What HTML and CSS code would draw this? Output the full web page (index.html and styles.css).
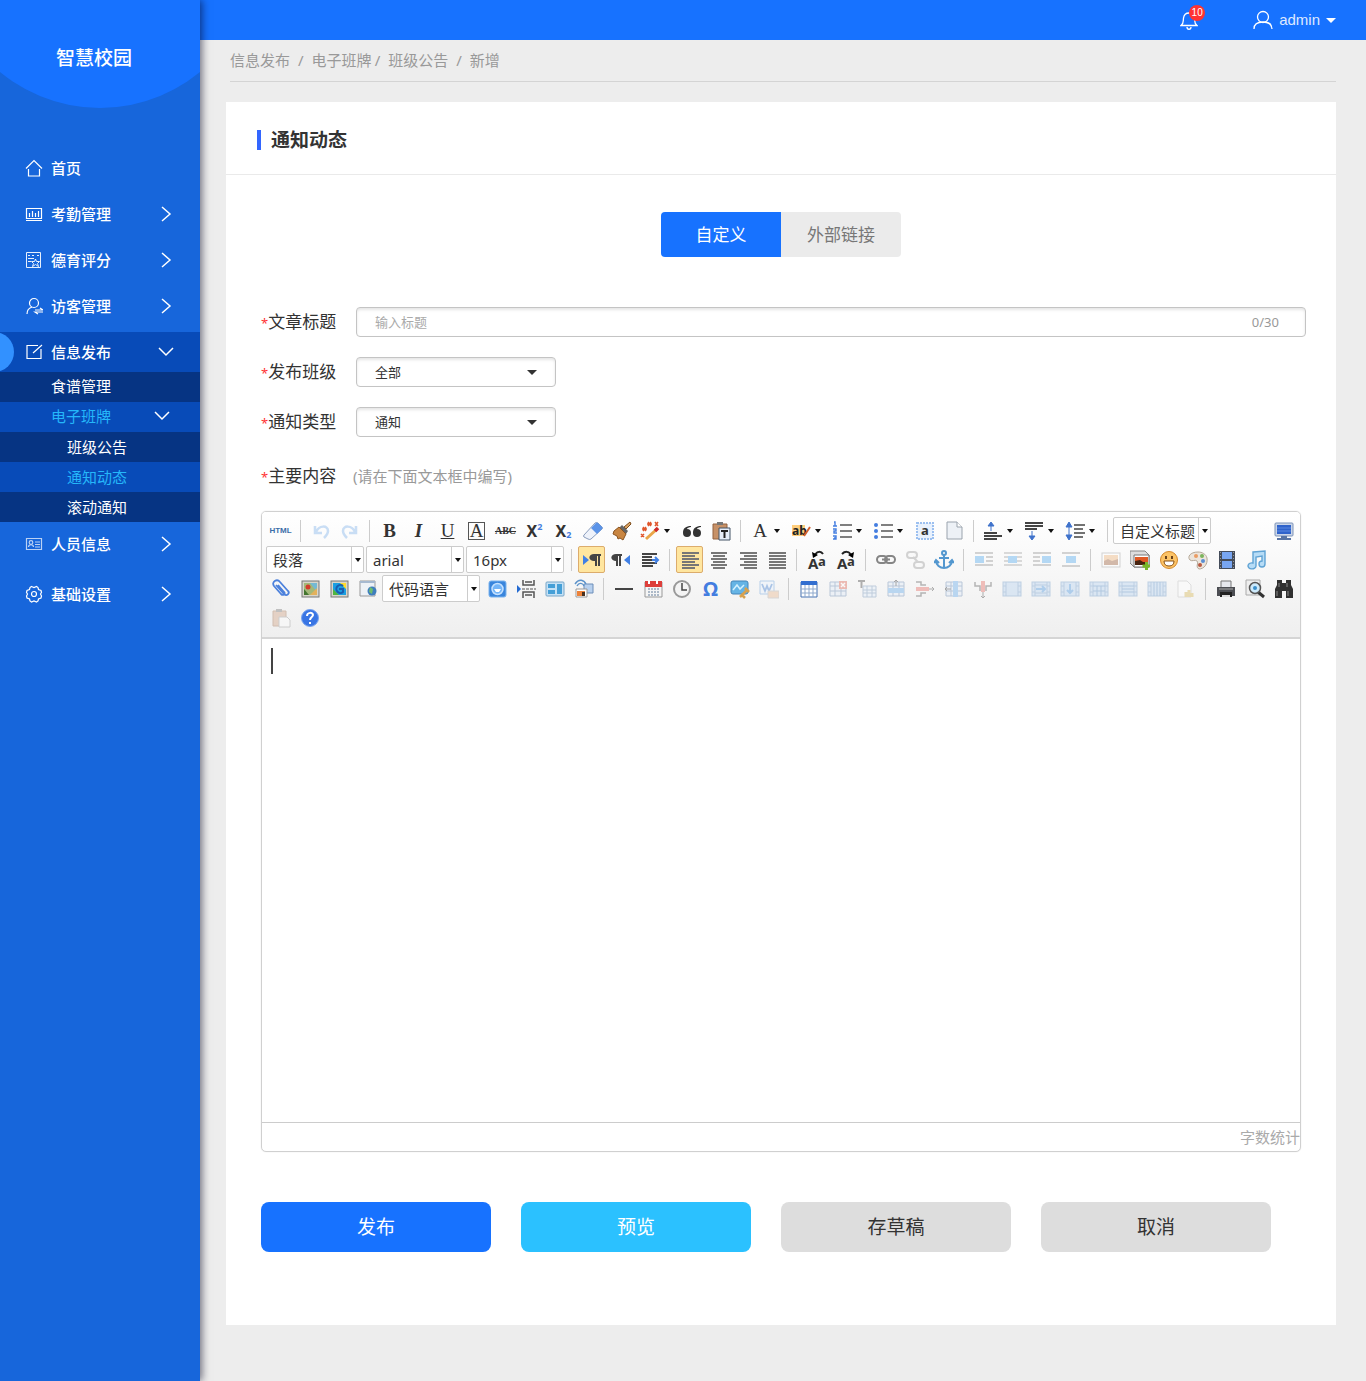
FILE: index.html
```html
<!DOCTYPE html>
<html lang="zh-CN">
<head>
<meta charset="utf-8">
<meta name="viewport" content="width=device-width, initial-scale=1">
<title>智慧校园</title>
<link rel="stylesheet" href="styles.css">
</head>
<body>
<svg class="sprite" aria-hidden="true">
  <defs>
    <symbol id="right" viewBox="0 0 16 16"><path d="M4 1l8 7-8 7" fill="none" stroke="currentColor" stroke-width="1.5"/></symbol>
    <symbol id="down" viewBox="0 0 16 16"><path d="M1 4l7 7 7-7" fill="none" stroke="currentColor" stroke-width="1.5"/></symbol>
    <symbol id="drop" viewBox="0 0 10 5"><path d="M0 0h10L5 5z" fill="currentColor"/></symbol>
    <symbol id="undo" viewBox="0 0 20 20"><path d="M4 5v7h7M5 11c3-7 12-7 12-1 0 3-2 5-4 7" fill="none" stroke="#7db0ea" stroke-width="2.5"/></symbol>
    <symbol id="redo" viewBox="0 0 20 20"><path d="M16 5v7H9M15 11C12 4 3 4 3 10c0 3 2 5 4 7" fill="none" stroke="#7db0ea" stroke-width="2.5"/></symbol>
    <symbol id="eraser" viewBox="0 0 20 20"><path d="M1 14L12 2q1-1 3 0l4 4q1 1 0 2L8 18q-1 1-3 0l-4-2q-1-1 0-2z" fill="#eef2fa" stroke="#8a9dbd"/><path d="M8 7l5-5q1-1 2 0l4 4q1 1 0 2l-5 5z" fill="#5a93e8"/></symbol>
    <symbol id="brush" viewBox="0 0 20 20"><path d="M18 1l1 2-5 5-2-2z" fill="#dca566" stroke="#7c4a18"/><path d="M10 4l6 6-2 3-7-6z" fill="#666"/><path d="M7 6l7 7-3 6-3-2-2 1-1-3-4-2 1-3z" fill="#c98642" stroke="#8a5420"/></symbol>
    <symbol id="magic" viewBox="0 0 20 20"><path d="M6 18L17 8" stroke="#e9a548" stroke-width="3"/><path d="M15 10l3-3" stroke="#cf2b2b" stroke-width="3.500"/><path d="M3 6l3 4m0-4l-3 4M2 8h5M8 1l3 4m0-4L8 5M7 3h5M15 1l3 4m0-4l-3 4M1 13l3 3m0-3l-3 3" stroke="#e0562c" stroke-width="1.500"/></symbol>
    <symbol id="quote" viewBox="0 0 20 20"><path d="M9 5C4 5 1 7 1 12a4 4 0 1 0 4-4c0-1 2-2 4-2zM19 5c-5 0-8 2-8 7a4 4 0 1 0 4-4c0-1 2-2 4-2z" fill="#333"/></symbol>
    <symbol id="pastetext" viewBox="0 0 20 20"><path d="M2 3h14v15H2z" fill="#c79167" stroke="#936341"/><path d="M6 1h6v3H6z" fill="#777"/><path d="M8 7h11v12H8z" fill="#e6edf8" stroke="#456"/><path d="M10 10h7m-3.500 0v7" stroke="#222" stroke-width="2"/></symbol>
    <symbol id="marker" viewBox="0 0 20 20"><path d="M1 4h13v11H1z" fill="#ffce7c"/><text x="1" y="14" font-size="12" font-weight="700" fill="#222">ab</text><path d="M13 15l6-9" stroke="#d3602d" stroke-width="2"/></symbol>
    <symbol id="ol" viewBox="0 0 20 20"><path d="M8 4h12M8 10h12M8 16h12" stroke="#555" stroke-width="1.500"/><path d="M2 1h1v4M1 5h4M1 8h3v2H2v2h3M1 15h3v3H1m1-1h2" fill="none" stroke="#437de0" stroke-width="1.400"/></symbol>
    <symbol id="ul" viewBox="0 0 20 20"><path d="M8 4h12M8 10h12M8 16h12" stroke="#555" stroke-width="1.500"/><g fill="#437de0"><circle cx="3" cy="4" r="2"/><circle cx="3" cy="10" r="2"/><circle cx="3" cy="16" r="2"/></g></symbol>
    <symbol id="selall" viewBox="0 0 20 20"><rect x="2" y="2" width="16" height="16" fill="#e8f1fd" stroke="#9cc0f0" stroke-width="2" stroke-dasharray="2 1"/><text x="6" y="14" font-size="13" font-weight="700" fill="#333">a</text></symbol>
    <symbol id="page" viewBox="0 0 20 20"><path d="M3 1h10l5 5v12H3z" fill="#edf1f6" stroke="#9aa3ad"/><path d="M13 1v5h5" fill="#fff" stroke="#9aa3ad"/></symbol>
    <symbol id="rowtop" viewBox="0 0 20 20"><path d="M1 12h13M1 15h18M1 18h13" stroke="#444" stroke-width="2"/><path d="M8 10V3M5 5l3-4 3 4z" fill="#3f72cb" stroke="#3f72cb"/></symbol>
    <symbol id="rowbottom" viewBox="0 0 20 20"><path d="M1 2h18M1 5h18M1 8h12" stroke="#444" stroke-width="2"/><path d="M8 10v6M5 15l3 4 3-4z" fill="#3f72cb" stroke="#3f72cb"/></symbol>
    <symbol id="lineh" viewBox="0 0 20 20"><path d="M9 4h11M9 8h9M9 12h11M9 16h9" stroke="#444" stroke-width="1.500"/><path d="M4 2v16M1 6l3-5 3 5zM1 14l3 5 3-5z" fill="#3f72cb" stroke="#3f72cb"/></symbol>
    <symbol id="screen" viewBox="0 0 20 20"><rect x="1" y="2" width="18" height="13" rx="1" fill="#cbd6e8" stroke="#7c93b8"/><path d="M3 4h14v9H3z" fill="#2f63cb"/><path d="M3 7h14M3 10h14" stroke="#5a89e2"/><path d="M7 15h6v2h4v2H3v-2h4z" fill="#5874a4"/></symbol>
    <symbol id="ltr" viewBox="0 0 20 20"><path d="M1 5l6 5-6 5z" fill="#4080e5"/><path d="M19 4h-7a4 3 0 0 0 0 7h1v5h2V6h1v10h2V6h1z" fill="#444"/></symbol>
    <symbol id="rtl" viewBox="0 0 20 20"><path d="M19 5l-6 5 6 5z" fill="#4080e5"/><path d="M11 4H5a4 3 0 0 0 0 7v5h2V6h1v10h2V6h1z" fill="#444"/></symbol>
    <symbol id="indent" viewBox="0 0 20 20"><path d="M2 4h15M2 7h10M2 10h10M2 13h15M2 16h11" stroke="#444" stroke-width="2"/><path d="M12 10h6m-3-3l3 3-3 3" fill="none" stroke="#4080e5" stroke-width="2"/></symbol>
    <symbol id="left" viewBox="0 0 20 20"><path d="M2 3h17M2 6h13M2 9h17M2 12h13M2 15h17M2 18h13" stroke="currentColor" stroke-width="1.800"/></symbol>
    <symbol id="center" viewBox="0 0 20 20"><path d="M2 3h16M4 6h12M2 9h16M4 12h12M2 15h16M4 18h12" stroke="currentColor" stroke-width="1.800"/></symbol>
    <symbol id="alignr" viewBox="0 0 20 20"><path d="M2 3h17M6 6h13M2 9h17M6 12h13M2 15h17M6 18h13" stroke="currentColor" stroke-width="1.800"/></symbol>
    <symbol id="justify" viewBox="0 0 20 20"><path d="M2 3h17M2 6h17M2 9h17M2 12h17M2 15h17M2 18h17" stroke="currentColor" stroke-width="1.800"/></symbol>
    <symbol id="upper" viewBox="0 0 20 20"><text x="1" y="19" font-size="15" font-weight="700" fill="#333">A</text><text x="11" y="16" font-size="13" font-weight="700" fill="#333">a</text><path d="M8 5c2-4 6-4 8-1" fill="none" stroke="#222" stroke-width="2"/><path d="M5 2l1 6 5-3z"/></symbol>
    <symbol id="lower" viewBox="0 0 20 20"><text x="1" y="19" font-size="15" font-weight="700" fill="#333">A</text><text x="11" y="16" font-size="13" font-weight="700" fill="#333">a</text><path d="M6 4c3-3 7-3 9 1" fill="none" stroke="#222" stroke-width="2"/><path d="M18 2l-1 6-5-3z"/></symbol>
    <symbol id="link" viewBox="0 0 20 20"><g fill="none" stroke="#858585" stroke-width="2"><rect x="1" y="6" width="10" height="7" rx="3.500"/><rect x="9" y="6" width="10" height="7" rx="3.500"/><path d="M6 9.500h8"/></g></symbol>
    <symbol id="unlink" viewBox="0 0 20 20"><g fill="none" stroke="#999" stroke-width="2"><rect x="2" y="2" width="10" height="6" rx="3"/><rect x="9" y="12" width="10" height="6" rx="3"/><path d="M8 7l5 5"/></g></symbol>
    <symbol id="anchor" viewBox="0 0 20 20"><g fill="none" stroke="#5397cf" stroke-width="2"><circle cx="10" cy="3" r="2"/><path d="M10 5v13M5 8h10M2 11c0 4 4 7 8 7s8-3 8-7M0 13l2-3 3 3M15 13l3-3 2 3"/></g></symbol>
    <symbol id="imgl" viewBox="0 0 20 20"><path d="M1 3h18M12 7h7M12 11h7M1 15h18" stroke="#999" stroke-width="2"/><path d="M1 6h9v7H1z" fill="#4fa8ee"/></symbol>
    <symbol id="imgi" viewBox="0 0 20 20"><path d="M1 3h18M1 7h18M1 11h18M1 15h18" stroke="#aaa" stroke-width="2"/><path d="M5 6h9v7H5z" fill="#4fa8ee"/></symbol>
    <symbol id="imgr" viewBox="0 0 20 20"><path d="M1 3h18M1 7h7M1 11h7M1 15h18" stroke="#999" stroke-width="2"/><path d="M10 6h9v7h-9z" fill="#4fa8ee"/></symbol>
    <symbol id="imgc" viewBox="0 0 20 20"><path d="M1 3h18M1 16h18" stroke="#999" stroke-width="2"/><path d="M5 6h10v7H5z" fill="#4fa8ee"/></symbol>
    <symbol id="photo" viewBox="0 0 20 20"><rect x="1" y="3" width="18" height="14" fill="#fff" stroke="#999"/><path d="M3 5h14v10H3z" fill="#efb277"/><path d="M3 15v-4l4-2 4 2 6-2v6z" fill="#9a5b36"/></symbol>
    <symbol id="photos" viewBox="0 0 20 20"><path d="M0 1h15l4 4v12H4L0 13z" fill="#ddd" stroke="#888"/><path d="M4 5h15v12H4z" fill="#fff" stroke="#777"/><path d="M5 7h13v8H5z" fill="#e05a25"/><path d="M5 15v-4l5-1 3 2h5v3z" fill="#47230f"/><path d="M16.500 12v8M12.500 16h8" stroke="#78b82a" stroke-width="3"/></symbol>
    <symbol id="smile" viewBox="0 0 20 20"><circle cx="10" cy="10" r="8.500" fill="#fcc366" stroke="#d58829"/><path d="M5 11h10q0 5-5 5t-5-5z" fill="#fff" stroke="#875016"/><path d="M7 6v3M13 6v3" stroke="#694019" stroke-width="2"/></symbol>
    <symbol id="palette" viewBox="0 0 20 20"><path d="M10 2C2 2-1 7 2 10c2 2 5-1 7 1s-2 6 2 8c5 0 9-5 8-11-1-4-5-6-9-6z" fill="#ece5dc" stroke="#b5a898"/><circle cx="8" cy="6" r="2" fill="#eb9c63"/><circle cx="14" cy="6" r="2" fill="#7cb45d"/><circle cx="15" cy="11" r="2" fill="#5a8ed3"/><circle cx="12" cy="15" r="2" fill="#b95a42"/></symbol>
    <symbol id="film" viewBox="0 0 20 20"><path d="M2 1h16v18H2z" fill="#444c5a"/><path d="M5 2h10v7H5zM5 11h10v7H5z" fill="#78a6f2"/><path d="M3.500 2v17M16.500 2v17" stroke="#999" stroke-dasharray="1 2"/></symbol>
    <symbol id="music" viewBox="0 0 20 20"><path d="M7 2l12-1v13a3 3 0 1 1-3-3V6l-6 1v9a4 3 0 1 1-3-3z" fill="#b7dcf6" stroke="#60a3d4" stroke-width="1.400"/></symbol>
    <symbol id="clip" viewBox="0 0 20 20"><path d="M5 6l8 9c3 3 6-1 4-3L9 3C6-1 0 3 3 7l7 8c2 2 5 0 3-2L7 6" fill="none" stroke="#4c81dc" stroke-width="1.800"/></symbol>
    <symbol id="picture" viewBox="0 0 20 20"><rect x="2" y="2" width="17" height="16" fill="#d7d5cb" stroke="#777"/><path d="M4 4h13v12H4z" fill="#74b9d4"/><path d="M4 4h6l7 9v3H4z" fill="#a3b878"/><path d="M10 16l7-7v7z" fill="#e3b15b"/><path d="M4 10l5 6H4z" fill="#43752f"/><circle cx="8" cy="8" r="2.500" fill="#d43b2b"/></symbol>
    <symbol id="gmap" viewBox="0 0 20 20"><rect x="2" y="2" width="17" height="16" fill="#d7d5cb" stroke="#777"/><path d="M4 4h13v12H4z" fill="#1b9ee1"/><path d="M11 4h6v6z" fill="#ffda2a"/><path d="M4 10l6 6H4z" fill="#50b541"/><path d="M14 7a4 4 0 1 0 0 6v-3h-4" fill="none" stroke="#195db0" stroke-width="2"/></symbol>
    <symbol id="frame" viewBox="0 0 20 20"><path d="M2 2h15v15H2z" fill="#edf1f6" stroke="#999"/><path d="M2 3h15" stroke="#a6b9d0" stroke-width="2"/><circle cx="14" cy="12" r="4.500" fill="#3f7ebd"/><path d="M12 8l3 2-1 5-3-2z" fill="#70bd6e"/></symbol>
    <symbol id="app" viewBox="0 0 20 20"><rect x="2" y="2" width="17" height="16" rx="2" fill="#3985dc" stroke="#7bb3ee"/><circle cx="10.500" cy="10" r="5.500" fill="#74b5f8" stroke="#c4e1ff" stroke-width="1.500"/><path d="M7 10h7l-2 3H9z" fill="#fff"/></symbol>
    <symbol id="break" viewBox="0 0 20 20"><path d="M1 6l4 4-4 4z" fill="#236ad1"/><path d="M6 10h14" stroke="#555" stroke-dasharray="3 1"/><path d="M7 1v5h11V1M7 19v-6h11v6M9 3h7M9 16h7" fill="none" stroke="#555" stroke-width="1.500"/></symbol>
    <symbol id="template" viewBox="0 0 20 20"><rect x="1" y="3" width="18" height="14" rx="1" fill="#c5e1f5" stroke="#78a6c8"/><path d="M3 5h7v4H3zM3 11h7v4H3zM12 5h5v10h-5z" fill="#459fd7"/></symbol>
    <symbol id="bg" viewBox="0 0 20 20"><path d="M10 5h9v9h-9z" fill="#b7d0ee" stroke="#6c8eb9"/><path d="M1 5c4-6 9-4 11 0M3 7c2-4 6-3 7 0" fill="none" stroke="#5b92ca" stroke-width="1.400"/><path d="M2 10h11v8H2z" fill="#fff" stroke="#999"/><path d="M3 12h8v5H3z" fill="#ed8239"/><path d="M8 13h3v4H8z" fill="#493121"/></symbol>
    <symbol id="hr" viewBox="0 0 20 20"><path d="M1 10h18" stroke="#444" stroke-width="2"/></symbol>
    <symbol id="cal" viewBox="0 0 20 20"><path d="M2 3h17v15H2z" fill="#f5f5f5" stroke="#999"/><path d="M2 2h17v6H2z" fill="#dd3f3b"/><path d="M6 1v4M14 1v4" stroke="#fff" stroke-width="2"/><path d="M5 10h11M5 13h11M5 16h11" stroke="#acb9c8" stroke-dasharray="2 1" stroke-width="2"/></symbol>
    <symbol id="clock" viewBox="0 0 20 20"><circle cx="10" cy="10" r="8" fill="#f4f4f4" stroke="#999" stroke-width="2"/><path d="M10 4v7h5" fill="none" stroke="#444" stroke-width="1.500"/></symbol>
    <symbol id="snap" viewBox="0 0 20 20"><rect x="1" y="2" width="17" height="13" rx="2" fill="#65b4e5" stroke="#4484b8"/><path d="M3 11l4-5 3 4 4-4" fill="none" stroke="#d4f1ff" stroke-width="1.500"/><path d="M10 18l7-7M11 15l4 4M15 9l4 4" stroke="#d7a14e" stroke-width="2.500"/></symbol>
    <symbol id="word" viewBox="0 0 20 20"><path d="M1 2h14v13H1z" fill="#e8f2fe" stroke="#5c98da"/><path d="M3 5l3 7 2-5 2 5 3-7" fill="none" stroke="#397ad0" stroke-width="1.800"/><path d="M9 12h11v7H9z" fill="#eab68c" stroke="#aaa"/></symbol>
    <symbol id="table" viewBox="0 0 20 20"><path d="M2 3h16v15H2z" fill="#fff" stroke="#4773b3"/><path d="M2 4h16" stroke="#336fd0" stroke-width="4"/><path d="M6 6v12M10 6v12M14 6v12M2 10h16M2 14h16" stroke="#8fa9cc"/></symbol>
    <symbol id="grid" viewBox="0 0 20 20"><path d="M2 3h16v14H2zM2 7h16M2 12h16M7 3v14M13 3v14" fill="#dfeaf8" stroke="#6283af"/></symbol>
    <symbol id="tdel" viewBox="0 0 20 20"><use href="#grid"/><path d="M11 2h8v8h-8z" fill="#dd6351"/><path d="M13 4l4 4m0-4l-4 4" stroke="#fff" stroke-width="1.500"/></symbol>
    <symbol id="ttitle" viewBox="0 0 20 20"><path d="M1 2h7M4.500 2v7" stroke="#444" stroke-width="2"/><path d="M6 7h13v11H6zM6 11h13M6 14h13M10 7v11M15 7v11" fill="#e1edfa" stroke="#7191b8"/></symbol>
    <symbol id="trow" viewBox="0 0 20 20"><use href="#grid"/><path d="M2 9h16v5H2z" fill="#62a8eb"/><path d="M10 7V1M8 3l2-2 2 2" fill="none" stroke="#333"/></symbol>
    <symbol id="trdel" viewBox="0 0 20 20"><path d="M1 3h5v3h5M1 17h5v-3h5" fill="none" stroke="#555" stroke-width="1.500"/><path d="M1 8h13v4H1z" fill="#e56960"/><path d="M14 10h5m-2-2l2 2-2 2" fill="none" stroke="#444"/></symbol>
    <symbol id="tcol" viewBox="0 0 20 20"><use href="#grid"/><path d="M9 2h5v16H9z" fill="#62a8eb"/><path d="M7 10H1m2-2l-2 2 2 2" fill="none" stroke="#333"/></symbol>
    <symbol id="tcdel" viewBox="0 0 20 20"><path d="M2 3v4h5v5M18 3v4h-5v5" fill="none" stroke="#555" stroke-width="1.500"/><path d="M8 2h4v11H8z" fill="#e56960"/><path d="M10 13v6m-2-2l2 2 2-2" fill="none" stroke="#444"/></symbol>
    <symbol id="cells" viewBox="0 0 20 20"><rect x="1" y="3" width="18" height="14" fill="#b4d0f0" stroke="#6d98c7"/><path d="M4 3v14M16 3v14M1 7h3M1 13h3M16 7h3M16 13h3" stroke="#6d98c7"/></symbol>
    <symbol id="cellr" viewBox="0 0 20 20"><use href="#cells"/><path d="M4 6h12M4 14h12" stroke="#6d98c7"/><path d="M5 10h9m-3-3l3 3-3 3" stroke="#4693dd" stroke-width="2" fill="none"/></symbol>
    <symbol id="celld" viewBox="0 0 20 20"><use href="#cells"/><path d="M10 5v9m-3-3l3 3 3-3" stroke="#4693dd" stroke-width="2" fill="none"/></symbol>
    <symbol id="cellg" viewBox="0 0 20 20"><use href="#cells"/><path d="M4 7h12M4 12h12M8 7v10M12 7v10" stroke="#5188c2"/></symbol>
    <symbol id="cellh" viewBox="0 0 20 20"><use href="#cells"/><path d="M4 7h12M4 10h12M4 13h12" stroke="#5188c2"/></symbol>
    <symbol id="cellv" viewBox="0 0 20 20"><use href="#cells"/><path d="M7 3v14M10 3v14M13 3v14" stroke="#5188c2"/></symbol>
    <symbol id="chart" viewBox="0 0 20 20"><path d="M2 2h9l4 4v12H2z" fill="#fff" stroke="#bbb"/><path d="M10 18v-5M13 18v-7M16 18v-4" stroke="#d8b753" stroke-width="3"/></symbol>
    <symbol id="print" viewBox="0 0 20 20"><path d="M5 2h10v7H5z" fill="#e6e8ed" stroke="#777"/><path d="M1 8h18v9H1z" fill="#4c4e53"/><path d="M3 10h14" stroke="#aaa"/><path d="M4 13h12v5H4z" fill="#222"/><path d="M6 17h8" stroke="#ddd" stroke-width="2"/></symbol>
    <symbol id="preview" viewBox="0 0 20 20"><path d="M1 1h14v15H1z" fill="#eee" stroke="#aaa"/><path d="M13 13l6 5" stroke="#333" stroke-width="3"/><circle cx="10" cy="9" r="5.500" fill="#cdeafb" stroke="#555" stroke-width="1.500"/><circle cx="10" cy="9" r="2" fill="#3b8fcb"/></symbol>
    <symbol id="find" viewBox="0 0 20 20"><path d="M3 1h5v3h4V1h5v5l2 4v9h-7v-7H8v7H1v-9l2-4z" fill="#303030"/><path d="M3 12v5M14 12v5M5 4v4M13 4v4" stroke="#8a8a8a"/></symbol>
    <symbol id="paste" viewBox="0 0 20 20"><path d="M2 3h13v15H2z" fill="#d1a283" stroke="#a27352"/><path d="M5 1h6v3H5z" fill="#777"/><path d="M8 9h8l3 3v7H8z" fill="#fff" stroke="#999"/></symbol>
    <symbol id="help" viewBox="0 0 20 20"><circle cx="10" cy="10" r="8.500" fill="#3975e4" stroke="#79a4ee"/><path d="M7 8c0-4 6-4 6-1 0 2-3 2-3 5M10 14v2" fill="none" stroke="#fff" stroke-width="2"/></symbol>
  </defs>
</svg>

<div class="app">
  <aside class="sidebar">
    <div class="brand">智慧校园</div>
    <nav>
      <ul class="nav">
        <li><a class="nav-item" href="#"><svg class="nav-icon" viewBox="0 0 18 18"><path d="M1 9.500l8-8 8 8M3.500 10v7h11v-7"/></svg>首页</a></li>
        <li><a class="nav-item" href="#"><svg class="nav-icon" viewBox="0 0 18 18"><path d="M1.500 3.500h15v10h-15zM1 15.500h16M4.500 8v4M7.500 6v6M10.500 8v4M13.500 6v6"/></svg>考勤管理<svg class="chevron"><use href="#right"/></svg></a></li>
        <li><a class="nav-item" href="#"><svg class="nav-icon" viewBox="0 0 18 18"><path d="M1.500 1.500h14v15h-14zM3 4.500h2M7 4.500h2M12 4.500h2M3 7.500h6M3 10.500h3M10.500 8l1 2.500h3l-2 2 1 3-3-2-3 2 1-3-2-2h3z" stroke-width="0.900"/></svg>德育评分<svg class="chevron"><use href="#right"/></svg></a></li>
        <li><a class="nav-item" href="#"><svg class="nav-icon" viewBox="0 0 18 18"><circle cx="9" cy="6" r="4.500"/><path d="M2 17c0-4 2-6 5-7M10 13h8l-3-2M18 15h-8l3 2"/></svg>访客管理<svg class="chevron"><use href="#right"/></svg></a></li>
        <li>
          <a class="nav-item active" href="#"><svg class="nav-icon" viewBox="0 0 18 18"><path d="M13 2.500H2v13h14V6M8 10l9-8"/></svg>信息发布<svg class="chevron"><use href="#down"/></svg></a>
          <ul class="subnav">
            <li><a href="#">食谱管理</a></li>
            <li><a class="current" href="#">电子班牌<svg class="chevron"><use href="#down"/></svg></a>
              <ul class="leafnav">
                <li><a href="#">班级公告</a></li>
                <li><a class="current" href="#">通知动态</a></li>
                <li><a href="#">滚动通知</a></li>
              </ul>
            </li>
          </ul>
        </li>
      </ul>
      <ul class="nav nav-lower">
        <li><a class="nav-item" href="#"><svg class="nav-icon faint" viewBox="0 0 18 18"><path d="M1.500 3.500h15v11h-15zM3.500 12c0-3 5-3 5 0M10 7h5M10 9.500h5M10 12h5"/><circle cx="6" cy="7.500" r="1.800"/></svg>人员信息<svg class="chevron"><use href="#right"/></svg></a></li>
        <li><a class="nav-item" href="#"><svg class="nav-icon" viewBox="0 0 18 18"><path d="M6.500 1.500l2.500 1 2.500-1 1.500 1 .5 2 2.500 1 .5 2-1 1.500 1 2-.5 2-2.500 1-.5 2-1.500 1-2.500-1-2.500 1-1.500-1-.5-2-2.500-1-.5-2 1-2-1-1.500.5-2 2.500-1 .5-2z"/><circle cx="9" cy="9" r="2.500"/></svg>基础设置<svg class="chevron"><use href="#right"/></svg></a></li>
      </ul>
    </nav>
  </aside>

  <div class="page">
    <header class="topbar">
      <button class="bell" type="button" aria-label="消息">
        <svg viewBox="0 0 18 20"><path d="M1 15.500h16c-3-2-2-4-2.500-7.500S12 3 9 3 4 4.500 3.500 8 4 13.500 1 15.500zM7 17c0 3 4 3 4 0" fill="none" stroke="#fff" stroke-width="1.300"/></svg>
        <span class="badge">10</span>
      </button>
      <button class="user" type="button">
        <svg class="user-icon" viewBox="0 0 20 20"><circle cx="10" cy="7" r="5.500"/><path d="M1 19c0-5 4-7 9-7s9 2 9 7"/></svg>
        <span>admin</span>
        <svg class="drop"><use href="#drop"/></svg>
      </button>
    </header>

    <main class="content">
      <nav class="crumbs" aria-label="面包屑">
        <a href="#">信息发布</a><i>/</i><a href="#">电子班牌</a><i class="tight">/</i><a href="#">班级公告</a><i>/</i><span>新增</span>
      </nav>

      <section class="card">
        <h1 class="card-title">通知动态</h1>
        <div class="tabs" role="tablist">
          <button class="tab selected" type="button" role="tab" aria-selected="true">自定义</button>
          <button class="tab" type="button" role="tab" aria-selected="false">外部链接</button>
        </div>

        <form class="form">
          <div class="field">
            <label for="title"><b>*</b>文章标题</label>
            <div class="textbox"><input id="title" type="text" placeholder="输入标题"><span>0/30</span></div>
          </div>
          <div class="field">
            <label for="class"><b>*</b>发布班级</label>
            <div class="picker"><select id="class"><option>全部</option></select><svg class="drop"><use href="#drop"/></svg></div>
          </div>
          <div class="field">
            <label for="kind"><b>*</b>通知类型</label>
            <div class="picker"><select id="kind"><option>通知</option></select><svg class="drop"><use href="#drop"/></svg></div>
          </div>
          <div class="field field-body">
            <label for="body"><b>*</b>主要内容</label>
            <span class="hint">(请在下面文本框中编写)</span>
          </div>

          <div class="editor">
            <div class="toolbar" role="toolbar" aria-label="编辑工具">
              <div class="tools">
                <button type="button" class="tool t-html">HTML</button><i class="sep"></i>
                <button type="button" class="tool off" aria-label="撤销"><svg><use href="#undo"/></svg></button>
                <button type="button" class="tool off" aria-label="重做"><svg><use href="#redo"/></svg></button><i class="sep"></i>
                <button type="button" class="tool t-serif t-bold">B</button>
                <button type="button" class="tool t-serif t-italic">I</button>
                <button type="button" class="tool t-serif t-under">U</button>
                <button type="button" class="tool t-serif"><span class="boxed">A</span></button>
                <button type="button" class="tool t-strike">ABC</button>
                <button type="button" class="tool t-script">X<sup>2</sup></button>
                <button type="button" class="tool t-script">X<sub>2</sub></button>
                <button type="button" class="tool" aria-label="清除格式"><svg><use href="#eraser"/></svg></button>
                <button type="button" class="tool" aria-label="格式刷"><svg><use href="#brush"/></svg></button>
                <button type="button" class="tool has-menu" aria-label="自动排版"><svg><use href="#magic"/></svg></button>
                <button type="button" class="tool" aria-label="引用"><svg><use href="#quote"/></svg></button>
                <button type="button" class="tool" aria-label="纯文本粘贴"><svg><use href="#pastetext"/></svg></button><i class="sep"></i>
                <button type="button" class="tool t-serif has-menu"><span>A</span></button>
                <button type="button" class="tool has-menu" aria-label="背景色"><svg><use href="#marker"/></svg></button>
                <button type="button" class="tool has-menu" aria-label="有序列表"><svg><use href="#ol"/></svg></button>
                <button type="button" class="tool has-menu" aria-label="无序列表"><svg><use href="#ul"/></svg></button>
                <button type="button" class="tool" aria-label="全选"><svg><use href="#selall"/></svg></button>
                <button type="button" class="tool" aria-label="清空文档"><svg><use href="#page"/></svg></button><i class="sep"></i>
                <button type="button" class="tool has-menu" aria-label="段前距"><svg><use href="#rowtop"/></svg></button>
                <button type="button" class="tool has-menu" aria-label="段后距"><svg><use href="#rowbottom"/></svg></button>
                <button type="button" class="tool has-menu" aria-label="行间距"><svg><use href="#lineh"/></svg></button><i class="sep"></i>
                <div class="combo"><select aria-label="自定义标题"><option>自定义标题</option></select></div>
                <button type="button" class="tool push" aria-label="全屏"><svg><use href="#screen"/></svg></button>
              </div>
              <div class="tools">
                <div class="combo"><select aria-label="段落格式"><option>段落</option></select></div>
                <div class="combo"><select aria-label="字体"><option>arial</option></select></div>
                <div class="combo"><select aria-label="字号"><option>16px</option></select></div><i class="sep"></i>
                <button type="button" class="tool on" aria-label="从左向右输入"><svg><use href="#ltr"/></svg></button>
                <button type="button" class="tool" aria-label="从右向左输入"><svg><use href="#rtl"/></svg></button>
                <button type="button" class="tool" aria-label="首行缩进"><svg><use href="#indent"/></svg></button><i class="sep"></i>
                <button type="button" class="tool on" aria-label="居左对齐"><svg><use href="#left"/></svg></button>
                <button type="button" class="tool" aria-label="居中对齐"><svg><use href="#center"/></svg></button>
                <button type="button" class="tool" aria-label="居右对齐"><svg><use href="#alignr"/></svg></button>
                <button type="button" class="tool" aria-label="两端对齐"><svg><use href="#justify"/></svg></button><i class="sep"></i>
                <button type="button" class="tool" aria-label="字母大写"><svg><use href="#upper"/></svg></button>
                <button type="button" class="tool" aria-label="字母小写"><svg><use href="#lower"/></svg></button><i class="sep"></i>
                <button type="button" class="tool" aria-label="超链接"><svg><use href="#link"/></svg></button>
                <button type="button" class="tool off" aria-label="取消链接"><svg><use href="#unlink"/></svg></button>
                <button type="button" class="tool" aria-label="锚点"><svg><use href="#anchor"/></svg></button><i class="sep"></i>
                <button type="button" class="tool off" aria-label="左浮动"><svg><use href="#imgl"/></svg></button>
                <button type="button" class="tool off" aria-label="默认"><svg><use href="#imgi"/></svg></button>
                <button type="button" class="tool off" aria-label="右浮动"><svg><use href="#imgr"/></svg></button>
                <button type="button" class="tool off" aria-label="居中"><svg><use href="#imgc"/></svg></button><i class="sep"></i>
                <button type="button" class="tool off" aria-label="单图上传"><svg><use href="#photo"/></svg></button>
                <button type="button" class="tool" aria-label="多图上传"><svg><use href="#photos"/></svg></button>
                <button type="button" class="tool" aria-label="表情"><svg><use href="#smile"/></svg></button>
                <button type="button" class="tool" aria-label="涂鸦"><svg><use href="#palette"/></svg></button>
                <button type="button" class="tool" aria-label="视频"><svg><use href="#film"/></svg></button>
                <button type="button" class="tool" aria-label="音乐"><svg><use href="#music"/></svg></button>
              </div>
              <div class="tools">
                <button type="button" class="tool" aria-label="附件"><svg><use href="#clip"/></svg></button>
                <button type="button" class="tool" aria-label="百度地图"><svg><use href="#picture"/></svg></button>
                <button type="button" class="tool" aria-label="谷歌地图"><svg><use href="#gmap"/></svg></button>
                <button type="button" class="tool" aria-label="插入框架"><svg><use href="#frame"/></svg></button>
                <div class="combo"><select aria-label="代码语言"><option>代码语言</option></select></div>
                <button type="button" class="tool" aria-label="百度应用"><svg><use href="#app"/></svg></button>
                <button type="button" class="tool" aria-label="分页"><svg><use href="#break"/></svg></button>
                <button type="button" class="tool" aria-label="模板"><svg><use href="#template"/></svg></button>
                <button type="button" class="tool" aria-label="背景"><svg><use href="#bg"/></svg></button><i class="sep"></i>
                <button type="button" class="tool" aria-label="分隔线"><svg><use href="#hr"/></svg></button>
                <button type="button" class="tool" aria-label="日期"><svg><use href="#cal"/></svg></button>
                <button type="button" class="tool" aria-label="时间"><svg><use href="#clock"/></svg></button>
                <button type="button" class="tool t-omega">Ω</button>
                <button type="button" class="tool" aria-label="截图"><svg><use href="#snap"/></svg></button>
                <button type="button" class="tool off" aria-label="图片转存"><svg><use href="#word"/></svg></button><i class="sep"></i>
                <button type="button" class="tool" aria-label="插入表格"><svg><use href="#table"/></svg></button>
                <button type="button" class="tool off" aria-label="删除表格"><svg><use href="#tdel"/></svg></button>
                <button type="button" class="tool off" aria-label="表格标题"><svg><use href="#ttitle"/></svg></button>
                <button type="button" class="tool off" aria-label="插入行"><svg><use href="#trow"/></svg></button>
                <button type="button" class="tool off" aria-label="删除行"><svg><use href="#trdel"/></svg></button>
                <button type="button" class="tool off" aria-label="插入列"><svg><use href="#tcol"/></svg></button>
                <button type="button" class="tool off" aria-label="删除列"><svg><use href="#tcdel"/></svg></button>
                <button type="button" class="tool off" aria-label="合并单元格"><svg><use href="#cells"/></svg></button>
                <button type="button" class="tool off" aria-label="右合并"><svg><use href="#cellr"/></svg></button>
                <button type="button" class="tool off" aria-label="下合并"><svg><use href="#celld"/></svg></button>
                <button type="button" class="tool off" aria-label="拆分单元格"><svg><use href="#cellg"/></svg></button>
                <button type="button" class="tool off" aria-label="拆分成行"><svg><use href="#cellh"/></svg></button>
                <button type="button" class="tool off" aria-label="拆分成列"><svg><use href="#cellv"/></svg></button>
                <button type="button" class="tool off" aria-label="图表"><svg><use href="#chart"/></svg></button><i class="sep"></i>
                <button type="button" class="tool" aria-label="打印"><svg><use href="#print"/></svg></button>
                <button type="button" class="tool" aria-label="页面预览"><svg><use href="#preview"/></svg></button>
                <button type="button" class="tool" aria-label="查询替换"><svg><use href="#find"/></svg></button>
              </div>
              <div class="tools">
                <button type="button" class="tool off" aria-label="粘贴"><svg><use href="#paste"/></svg></button>
                <button type="button" class="tool" aria-label="帮助"><svg><use href="#help"/></svg></button>
              </div>
            </div>
            <div class="writing"><textarea id="body"></textarea><i class="caret"></i></div>
            <div class="status">字数统计</div>
          </div>

          <div class="actions">
            <button class="action publish" type="submit">发布</button>
            <button class="action look" type="button">预览</button>
            <button class="action" type="button">存草稿</button>
            <button class="action" type="button">取消</button>
          </div>
        </form>
      </section>
    </main>
  </div>
</div>
</body>
</html>
```
FILE: styles.css
```css
* { box-sizing: border-box; }

body {
  margin: 0;
  background: #ededed;
  color: #333;
  font-family: "Noto Sans", "Noto Sans CJK SC", sans-serif;
  font-size: 15px;
  line-height: 20px;
}

ul { list-style: none; margin: 0; padding: 0; }
a { color: inherit; text-decoration: none; }
i { font-style: normal; }
button, input, select, textarea { font: inherit; color: inherit; margin: 0; padding: 0; border: 0; background: none; }
button, select { cursor: pointer; }
select { appearance: none; }
.sprite { position: absolute; width: 0; height: 0; }

.app { display: flex; min-height: 100vh; }

/* Sidebar */
.sidebar {
  position: relative;
  z-index: 1;
  flex: 0 0 200px;
  background: #1766db;
  color: #fff;
  box-shadow: 2px 0 8px rgba(0, 0, 30, 0.55);
}
.brand {
  height: 108px;
  padding: 43px 12px 0 0;
  background: #1772ff;
  clip-path: circle(157px at 50% -49px);
  font-size: 19px;
  font-weight: 500;
  line-height: 30px;
  text-align: center;
}
.nav { display: flex; flex-direction: column; gap: 6px; padding-top: 40px; }
.nav-lower { gap: 10px; padding-top: 2px; }
.nav-item {
  position: relative;
  display: flex;
  align-items: center;
  height: 40px;
  padding: 0 26px 0 25px;
  font-weight: 500;
}
.nav-icon { width: 18px; height: 18px; margin-right: 8px; fill: none; stroke: #fff; stroke-width: 1.2; }
.faint { opacity: 0.7; }
.chevron { width: 16px; height: 16px; margin-left: auto; }
.active { background: #084bb8; overflow: hidden; }
.active::before {
  content: "";
  position: absolute;
  left: -26px;
  width: 40px;
  height: 40px;
  border-radius: 50%;
  background: #3291ff;
}
.subnav a { display: flex; align-items: center; height: 30px; padding: 0 30px 2px 51px; background: #063483; }
.leafnav a { padding: 0 30px 0 67px; }
.subnav .current { background: #084bb8; color: #25b7fa; }
.subnav .chevron { color: #fff; }

/* Top bar */
.page { flex: 1; min-width: 0; }
.topbar {
  display: flex;
  justify-content: flex-end;
  align-items: center;
  gap: 55px;
  height: 40px;
  padding-right: 30px;
  background: #1772ff;
  color: #fff;
}
.bell { position: relative; width: 18px; height: 20px; }
.bell svg { display: block; width: 18px; height: 20px; }
.badge {
  position: absolute;
  left: 9px;
  top: -5px;
  width: 16px;
  height: 16px;
  border-radius: 50%;
  background: #f33;
  font: 10px/16px "Liberation Sans", sans-serif;
}
.user { display: flex; align-items: center; font: 15px/20px "Liberation Sans", sans-serif; }
.user-icon { width: 20px; height: 20px; margin-right: 6px; fill: none; stroke: #fff; stroke-width: 1.3; }
.user span { margin-right: 6px; opacity: 0.85; }
.drop { width: 10px; height: 5px; }

/* Breadcrumb and card */
.content { padding: 0 30px 56px 26px; }
.crumbs {
  height: 42px;
  margin: 0 0 20px 4px;
  border-bottom: 1px solid #d4d4d4;
  color: #999;
  line-height: 40px;
}
.crumbs i { margin: 0 8px; }
.crumbs .tight { margin: 0 8px 0 3px; }
.card { padding-bottom: 73px; background: #fff; }
.card-title {
  display: flex;
  align-items: center;
  height: 73px;
  margin: 0;
  padding: 3px 31px 0;
  border-bottom: 1px solid #eaeaea;
  font-size: 19px;
  font-weight: 700;
}
.card-title::before { content: ""; width: 4px; height: 20px; margin-right: 10px; background: #36f; }
.tabs { display: flex; justify-content: center; padding: 37px 0 50px; }
.tab { width: 120px; height: 45px; border-radius: 0 4px 4px 0; background: #ebebeb; color: #777; font-size: 17px; }
.selected { border-radius: 4px 0 0 4px; background: #1772ff; color: #fff; }

/* Form */
.form { padding: 0 30px 0 35px; }
.field { display: flex; align-items: center; height: 30px; margin-bottom: 20px; }
.field label { flex: 0 0 95px; font-size: 17px; }
.field b { color: #f33; font-size: 13px; font-weight: 400; }
.textbox, .picker {
  display: flex;
  align-items: center;
  height: 30px;
  border: 1px solid #c4c4c4;
  border-radius: 4px;
  box-shadow: inset 0 2px 3px rgba(0, 0, 0, 0.1);
  font-size: 13px;
}
.textbox { flex: 1; padding: 0 26px 0 18px; color: #999; }
.textbox input { flex: 1; min-width: 0; outline: 0; }
.textbox input::placeholder { color: #aaa; }
.picker { position: relative; width: 200px; }
.picker select { width: 100%; height: 28px; padding-left: 18px; }
.picker .drop { position: absolute; right: 18px; top: 12px; pointer-events: none; }
.field-body { margin: 24px 0 20px; }
.field .hint { margin-left: -3px; color: #999; }

/* Rich text editor */
.editor { margin-right: 5px; border: 1px solid #d0d0d0; border-radius: 5px; box-shadow: 0 0 1px #ccc; }
.toolbar {
  padding: 4px 2px 5px 4px;
  border-bottom: 2px solid #d5d5d5;
  border-radius: 4px 4px 0 0;
  background: linear-gradient(#fff, #efefef);
}
.tools { display: flex; flex-wrap: wrap; align-items: center; min-height: 29px; }
.tool {
  display: flex;
  flex: 0 0 29px;
  align-items: center;
  justify-content: center;
  height: 27px;
  color: #777;
  line-height: 20px;
}
.tool svg { width: 20px; height: 20px; font-family: "Noto Sans", sans-serif; }
.off svg { opacity: 0.4; }
.on { flex-basis: 27px; margin: 0 1px; border: 1px solid #dcac6c; border-radius: 2px; background: #ffe69f; }
.push { margin-left: auto; }
.has-menu { flex-basis: 41px; justify-content: flex-start; padding-left: 4px; }
.has-menu::after { content: ""; margin-left: 4px; border: 3px solid transparent; border-top: 4px solid #111; border-bottom: 0; }
.has-menu span { width: 20px; }
.sep { width: 1px; height: 22px; margin: 0 5px; background: #ccc; }
.tool.t-html { color: #3b6ea8; font: 700 8px/20px "Liberation Sans", sans-serif; }
.tool.t-serif { color: #333; font: 400 19px/20px "Liberation Serif", serif; }
.tool.t-bold { font-weight: 700; }
.tool.t-italic { font-style: italic; font-weight: 700; }
.t-under { text-decoration: underline; }
.boxed { width: 17px; height: 18px; border: 1px solid #555; line-height: 16px; }
.tool.t-strike { color: #333; font: 700 10px/20px "Liberation Serif", serif; text-decoration: line-through; }
.tool.t-script { height: 18px; color: #333; font-weight: 700; font-size: 16px; }
.t-script sup, .t-script sub { color: #437de0; font-size: 9px; line-height: 10px; }
.t-script sup { align-self: flex-start; }
.t-script sub { align-self: flex-end; }
.tool.t-omega { color: #437de0; font-size: 20px; font-weight: 700; }
.combo {
  flex: 0 0 98px;
  height: 27px;
  margin-right: 2px;
  border: 1px solid #ccc;
  border-radius: 2px;
  background: linear-gradient(#ccc, #ccc) right 11px top / 1px 100% no-repeat #fff;
  position: relative;
}
.combo::after {
  content: "";
  position: absolute;
  right: 2px;
  top: 11px;
  border: 3px solid transparent;
  border-top: 4px solid #111;
  border-bottom: 0;
  pointer-events: none;
}
.combo select { width: 100%; height: 25px; padding-left: 6px; }
.writing { position: relative; height: 483px; }
.writing textarea { display: block; width: 100%; height: 100%; padding: 10px; outline: 0; resize: none; }
.caret { position: absolute; left: 9px; top: 9px; width: 2px; height: 26px; background: #444; }
.status { height: 29px; border-top: 1px solid #ccc; color: #aaa; line-height: 28px; text-align: right; }

.actions { display: flex; flex-wrap: wrap; gap: 30px; padding-top: 50px; }
.action { width: 230px; height: 50px; border-radius: 8px; background: #ddd; font-size: 19px; }
.publish { background: #1772ff; color: #fff; }
.look { background: #2bc1ff; color: #fff; }
```
